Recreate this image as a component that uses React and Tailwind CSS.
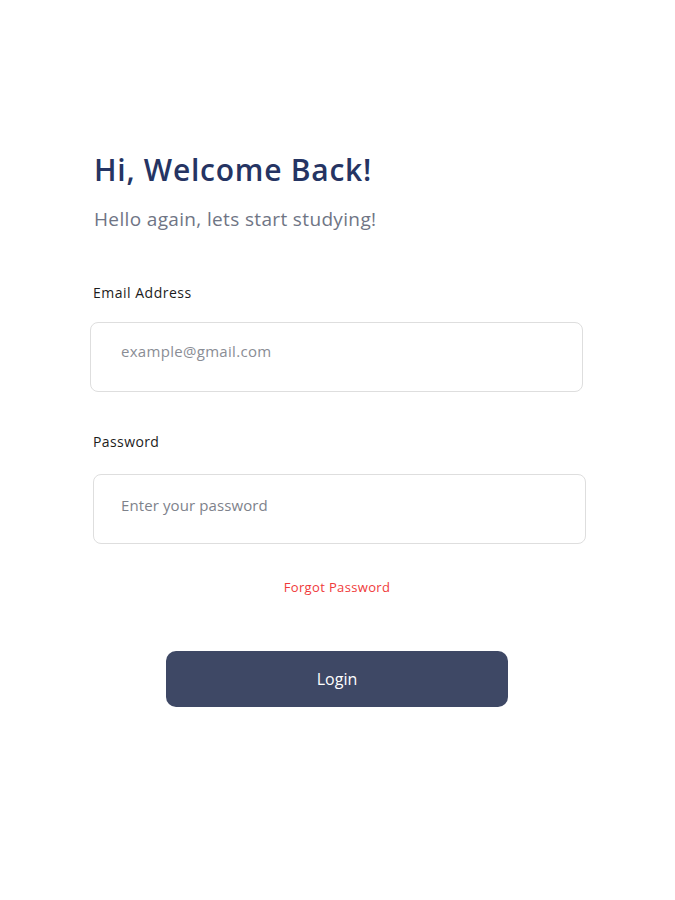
import { useState } from "react";

function App() {
  const [email, setEmail] = useState("");
  const [password, setPassword] = useState("");

  return (
    <div className="min-h-screen w-full bg-white font-['Open_Sans',sans-serif]">
      <div className="pt-[150px] pl-[93px] pr-[89px]">
        {/* Heading */}
        <h1 className="ml-[1px] text-[30px] leading-[40px] font-semibold text-[#253463] tracking-[0.75px]">
          Hi, Welcome Back!
        </h1>
        <p className="mt-[18px] ml-[1px] text-[19px] leading-[22px] text-[#6f7585] tracking-[0.35px]">
          Hello again, lets start studying!
        </p>

        {/* Email */}
        <label className="block mt-[54px] text-[14px] leading-[18px] text-[#1c1c1c] tracking-[0.5px]">
          Email Address
        </label>
        <input
          type="email"
          value={email}
          onChange={(e) => setEmail(e.target.value)}
          placeholder="example@gmail.com"
          className="mt-[20px] -ml-[3px] w-[493px] h-[70px] rounded-[8px] border border-[#dedede] pl-[30px] pb-[12px] text-[15px] tracking-[0.3px] text-[#333] placeholder:text-[#8a8d95] outline-none"
        />

        {/* Password */}
        <label className="block mt-[41px] text-[14px] leading-[18px] text-[#1c1c1c] tracking-[0.4px]">
          Password
        </label>
        <input
          type="password"
          value={password}
          onChange={(e) => setPassword(e.target.value)}
          placeholder="Enter your password"
          className="mt-[23px] w-[493px] h-[70px] rounded-[8px] border border-[#dedede] pl-[27px] pb-[8px] text-[15px] tracking-[0.1px] text-[#333] placeholder:text-[#7e828b] outline-none"
        />

        <div className="mt-[35px] w-[488px] text-center text-[13px] leading-[16px] tracking-[0.35px] text-[#f03a3a]">
          Forgot Password
        </div>

        {/* Login */}
        <div className="mt-[56px] w-[488px] flex justify-center">
          <button className="w-[342px] h-[56px] rounded-[10px] bg-[#3e4865] text-white text-[16px] font-medium">
            Login
          </button>
        </div>
      </div>
    </div>
  );
}

export default App;
